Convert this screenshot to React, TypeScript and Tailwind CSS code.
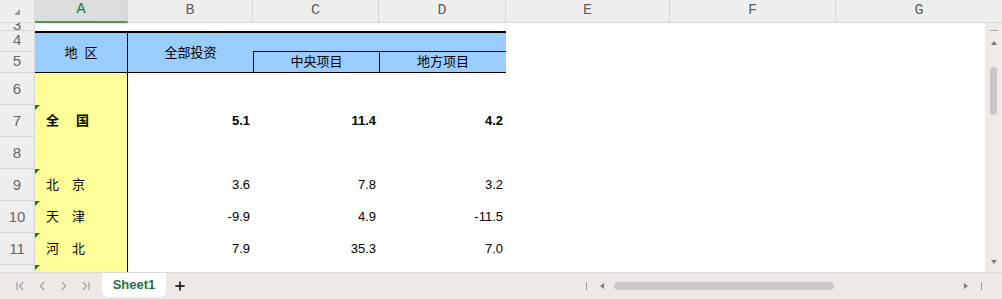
import { ChevronFirst, ChevronLast, ChevronLeft, ChevronRight, Plus } from 'lucide-react'

type Row = { n: number; name?: [string, string]; vals?: [string, string, string]; bold?: boolean; flag?: boolean }

const rows: Row[] = [
  { n: 6 },
  { n: 7, name: ['全', '国'], vals: ['5.1', '11.4', '4.2'], bold: true, flag: true },
  { n: 8 },
  { n: 9, name: ['北', '京'], vals: ['3.6', '7.8', '3.2'], flag: true },
  { n: 10, name: ['天', '津'], vals: ['-9.9', '4.9', '-11.5'], flag: true },
  { n: 11, name: ['河', '北'], vals: ['7.9', '35.3', '7.0'], flag: true },
  { n: 12, flag: true },
]

const colHeads = [
  { k: 'B', w: 'w-[125px]' },
  { k: 'C', w: 'w-[126px]' },
  { k: 'D', w: 'w-[127px]' },
  { k: 'E', w: 'w-[164px]' },
  { k: 'F', w: 'w-[166px]' },
]

function RowNum({ n, mono, short }: { n: number; mono?: boolean; short?: boolean }) {
  return (
    <div
      className={`flex justify-center overflow-hidden bg-[#eeeeee] border-b border-r border-[#d6d6d6] text-[15px] leading-none text-[#666666] ${
        short ? 'items-start' : 'items-center'
      } ${mono ? "font-['Liberation_Mono',monospace]" : "font-['Liberation_Sans',sans-serif]"}`}
    >
      <span className={short ? '-mt-[4px]' : ''}>{n}</span>
    </div>
  )
}

const blue = 'bg-[#99ccff] flex items-center justify-center text-[13px] text-black'

export default function App() {
  return (
    <div className="w-[1002px] h-[299px] overflow-hidden bg-white flex flex-col font-['Liberation_Sans','Noto_Sans_CJK_SC',sans-serif]">
      {/* column letters */}
      <div className="flex h-[23px] shrink-0 bg-[#eeeeee] font-['Liberation_Mono',monospace] text-[15px] text-[#5e5e5e]">
        <div className="w-[35px] flex items-end justify-end pr-[14px] pb-[7px] border-b border-r border-[#d6d6d6]">
          <div className="w-0 h-0 border-l-[6px] border-l-transparent border-b-[6px] border-b-[#9c9c9c]" />
        </div>
        <div className="w-[93px] flex items-center justify-center bg-[#dcdcdc] text-[#217346] border-r border-[#d6d6d6] border-b-2 border-b-[#469c46]">
          A
        </div>
        {colHeads.map((c) => (
          <div key={c.k} className={`${c.w} flex items-center justify-center border-r border-b border-[#d6d6d6]`}>
            {c.k}
          </div>
        ))}
        <div className="flex-1 flex items-center justify-center border-b border-[#d6d6d6]">G</div>
      </div>

      <div className="flex flex-1 min-h-0">
        <div className="flex-1 overflow-hidden">
          <div className="grid grid-cols-[35px_93px_125px_126px_127px_1fr] grid-rows-[8px_21px_21px_repeat(7,32px)]">
            {/* row 3 */}
            <RowNum n={3} mono short />
            <div className="col-span-5" />

            {/* rows 4-5: table head */}
            <RowNum n={4} mono />
            <div className={`${blue} row-span-2 border-t-2 border-b border-r border-black gap-[7px]`}>
              <span>地</span>
              <span>区</span>
            </div>
            <div className={`${blue} row-span-2 border-t-2 border-b border-black`}>全部投资</div>
            <div className={`${blue} col-span-2 border-t-2 border-b border-black`} />
            <div />

            <RowNum n={5} mono />
            <div className={`${blue} border-l border-b border-black`}>中央项目</div>
            <div className={`${blue} border-l border-b border-black`}>地方项目</div>
            <div />

            {rows.map((r) => (
              <div key={r.n} className="contents">
                <RowNum n={r.n} />
                <div
                  className={`relative bg-[#ffff99] border-r border-black flex items-center pl-[11px] text-[13px] text-black ${
                    r.bold ? 'font-bold gap-[17px]' : 'gap-[13px]'
                  }`}
                >
                  {r.flag && (
                    <div className="absolute left-0 top-0 w-0 h-0 border-t-[5px] border-t-[#127a12] border-r-[5px] border-r-transparent" />
                  )}
                  {r.name && (
                    <>
                      <span>{r.name[0]}</span>
                      <span>{r.name[1]}</span>
                    </>
                  )}
                </div>
                {[0, 1, 2].map((i) => (
                  <div
                    key={i}
                    className={`flex items-center justify-end pr-[3px] text-[13px] text-black ${r.bold ? 'font-bold' : ''}`}
                  >
                    {r.vals?.[i]}
                  </div>
                ))}
                <div />
              </div>
            ))}
          </div>
        </div>

        {/* vertical scrollbar */}
        <div className="w-[17px] shrink-0 bg-[#eeeae8] flex flex-col items-center">
          <div className="mt-[7px] w-[8px] h-px bg-[#a9a9a9]" />
          <div className="mt-[10px] w-0 h-0 border-x-[3px] border-x-transparent border-b-[4px] border-b-[#7a7a7a]" />
          <div className="mt-[22px] w-[7px] h-[48px] rounded-full bg-[#cac6c5]" />
          <div className="mt-auto mb-[8px] w-0 h-0 border-x-[3px] border-x-transparent border-t-[4px] border-t-[#7a7a7a]" />
        </div>
      </div>

      {/* sheet tabs */}
      <div className="flex h-[27px] shrink-0 bg-[#eee8e6] border-t border-[#dedad8]">
        <div className="w-[102px] flex items-center pl-[13px] gap-[8px] text-[#a3a3a3]">
          <ChevronFirst size={14} strokeWidth={2.2} />
          <ChevronLeft size={14} strokeWidth={2.2} />
          <ChevronRight size={14} strokeWidth={2.2} />
          <ChevronLast size={14} strokeWidth={2.2} />
        </div>
        <div className="w-[64px] h-[24px] bg-white rounded-b-md flex items-center justify-center text-[13px] font-bold text-[#1e7145]">
          Sheet1
        </div>
        <div className="flex items-center ml-[7px] text-black">
          <Plus size={14} strokeWidth={2.5} />
        </div>
        <div className="flex-1" />
        <div className="w-[422px] flex items-center pl-[6px]">
          <div className="w-px h-[8px] bg-[#9e9e9e]" />
          <div className="ml-[13px] w-0 h-0 border-y-[3px] border-y-transparent border-r-[4px] border-r-[#7a7a7a]" />
          <div className="ml-[10px] w-[220px] h-[8px] rounded-full bg-[#cdc8c7]" />
          <div className="flex-1" />
          <div className="w-0 h-0 border-y-[3px] border-y-transparent border-l-[4px] border-l-[#7a7a7a]" />
          <div className="ml-[13px] w-px h-[8px] bg-[#9e9e9e]" />
          <div className="w-[20px]" />
        </div>
      </div>
    </div>
  )
}
